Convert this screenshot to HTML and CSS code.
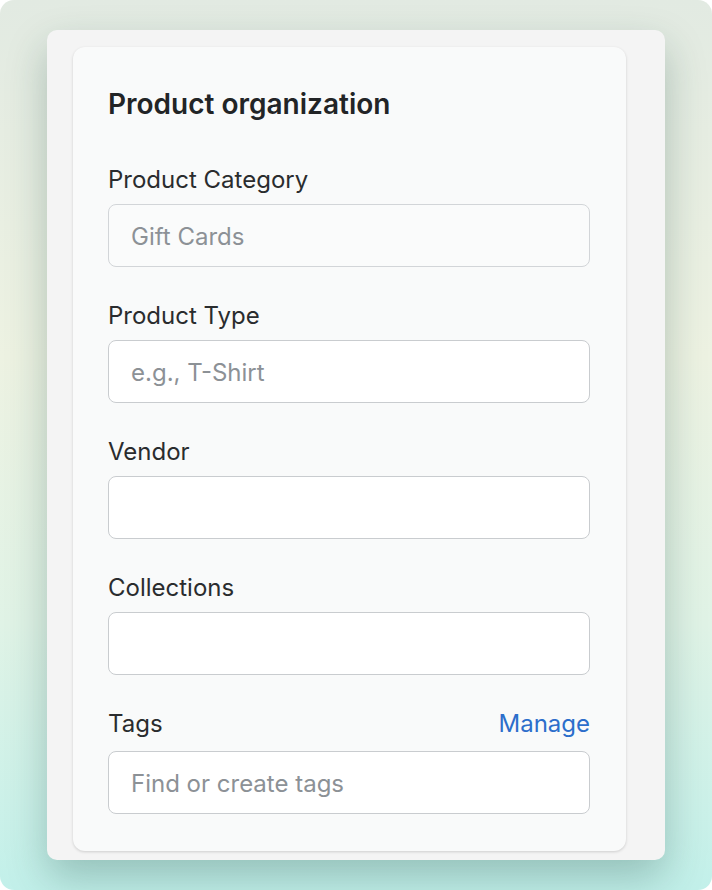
FILE: index.html
```html
<!DOCTYPE html>
<html lang="en">
<head>
  <meta charset="UTF-8" />
  <meta name="viewport" content="width=device-width, initial-scale=1.0"/>
  <title>Product organization</title>
  <link rel="stylesheet" href="styles.css">
</head>
<body>
  <div class="screen">
    <div class="panel">
      <div class="card">
        <h2>Product organization</h2>

        <div class="field">
          <label>Product Category</label>
          <input type="text" class="campo desativado" placeholder="Gift Cards" disabled>
        </div>

        <div class="field">
          <label>Product Type</label>
          <input type="text" class="campo" placeholder="e.g., T-Shirt">
        </div>

        <div class="field">
          <label>Vendor</label>
          <input type="text" class="campo">
        </div>

        <div class="field">
          <label>Collections</label>
          <input type="text" class="campo">
        </div>

        <div class="field">
          <div class="field-top">
            <label>Tags</label>
            <a href="#" class="manage">Manage</a>
          </div>
          <input type="text" class="campo" placeholder="Find or create tags">
        </div>
      </div>
    </div>
  </div>
</body>
</html>
```

FILE: styles.css
```css
body {
  margin: 0;
  background-color: #ffffff;
  font-family: Inter, "Noto Sans", Arial, sans-serif;
}

.screen {
  width: 712px;
  height: 890px;
  box-sizing: border-box;
  padding: 30px 0 0 47px;
  border-radius: 14px;
  overflow: hidden;
  background: linear-gradient(180deg, #e2eae2 0%, #edf2e2 40%, #e0f3e6 70%, #c2f0ea 100%);
}

.panel {
  width: 618px;
  height: 830px;
  box-sizing: border-box;
  padding: 17px 39px 9px 26px;
  background-color: #f4f4f4;
  border-radius: 10px;
  box-shadow: 0 18px 40px rgba(20, 70, 60, 0.28);
}

.card {
  height: 100%;
  box-sizing: border-box;
  padding: 41px 36px 0 35px;
  background-color: #f9fafa;
  border-radius: 12px;
  box-shadow: 0 1px 3px rgba(0, 0, 0, 0.16);
}

h2 {
  margin: 0 0 46px;
  font-size: 28px;
  line-height: 32px;
  font-weight: 600;
  color: #222426;
}

.field {
  margin-bottom: 35px;
}

.field label {
  display: block;
  font-size: 24px;
  line-height: 28px;
  color: #2a2c2e;
  margin-bottom: 10px;
}

.field-top {
  display: flex;
  justify-content: space-between;
  align-items: flex-end;
  height: 28px;
  margin-bottom: 13px;
}

.field-top label {
  margin-bottom: 0;
}

.manage {
  font-size: 24px;
  line-height: 28px;
  color: #2c6ecb;
  text-decoration: none;
}

.campo {
  display: block;
  width: 100%;
  height: 63px;
  box-sizing: border-box;
  padding: 2px 22px 0;
  border: 1px solid #c9cccf;
  border-radius: 8px;
  background-color: #ffffff;
  font-family: inherit;
  font-size: 24px;
  color: #202223;
}

.campo::placeholder {
  color: #8c9196;
}

.campo.desativado {
  background-color: #fafbfb;
  border-color: #d2d5d8;
}
```
